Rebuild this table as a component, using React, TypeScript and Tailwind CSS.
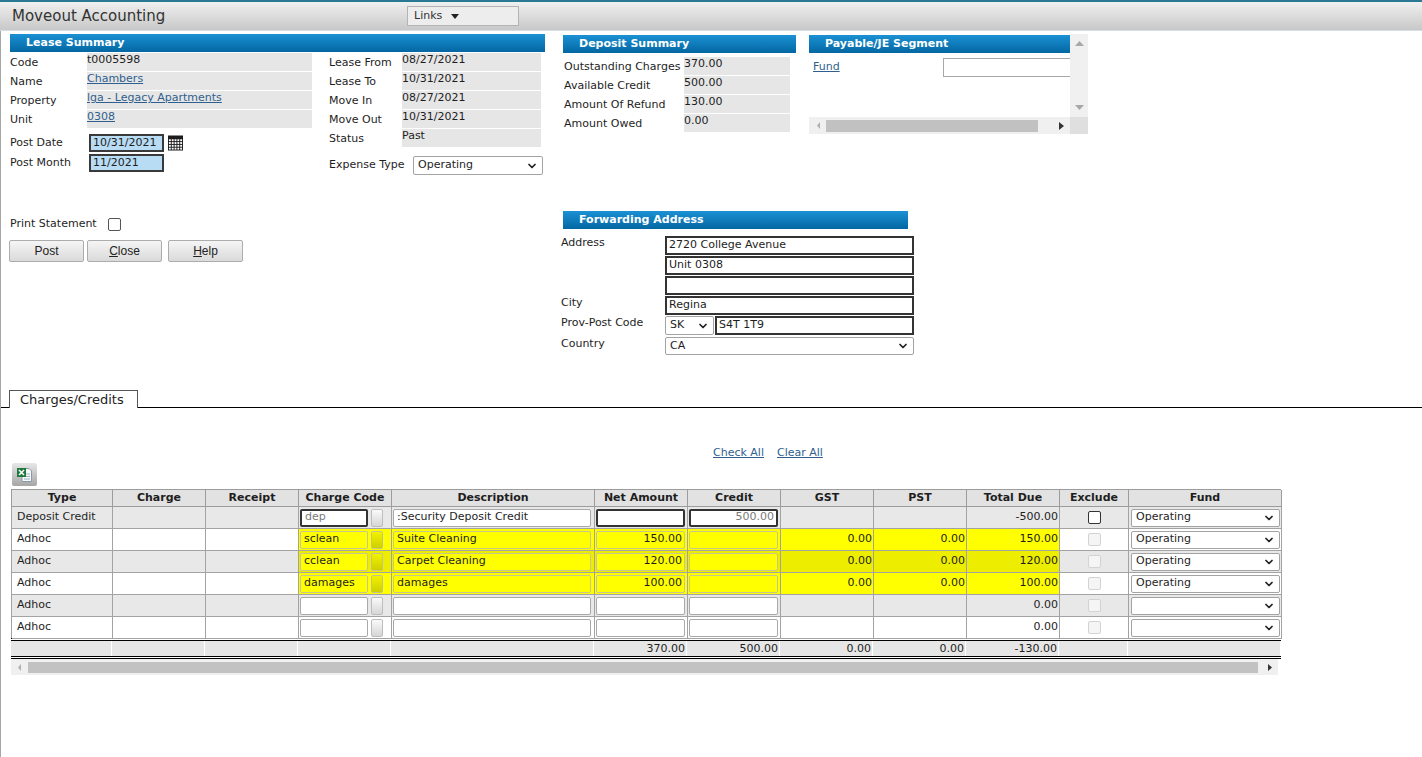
import { ChevronDown } from 'lucide-react';

type ChargeRow = {
  type: string;
  code: string;
  desc: string;
  net: string;
  credit: string;
  gst: string;
  pst: string;
  total: string;
  fund: string;
  deposit?: boolean;
  marked?: boolean;
};

const rows: ChargeRow[] = [
  { type: 'Deposit Credit', code: 'dep', desc: ':Security Deposit Credit', net: '', credit: '500.00', gst: '', pst: '', total: '-500.00', fund: 'Operating', deposit: true },
  { type: 'Adhoc', code: 'sclean', desc: 'Suite Cleaning', net: '150.00', credit: '', gst: '0.00', pst: '0.00', total: '150.00', fund: 'Operating', marked: true },
  { type: 'Adhoc', code: 'cclean', desc: 'Carpet Cleaning', net: '120.00', credit: '', gst: '0.00', pst: '0.00', total: '120.00', fund: 'Operating', marked: true },
  { type: 'Adhoc', code: 'damages', desc: 'damages', net: '100.00', credit: '', gst: '0.00', pst: '0.00', total: '100.00', fund: 'Operating', marked: true },
  { type: 'Adhoc', code: '', desc: '', net: '', credit: '', gst: '', pst: '', total: '0.00', fund: '' },
  { type: 'Adhoc', code: '', desc: '', net: '', credit: '', gst: '', pst: '', total: '0.00', fund: '' },
];

const headers = ['Type', 'Charge', 'Receipt', 'Charge Code', 'Description', 'Net Amount', 'Credit', 'GST', 'PST', 'Total Due', 'Exclude', 'Fund'];
const cols = 'grid grid-cols-[101px_93px_93px_93px_203px_93px_93px_93px_93px_93px_69px_153px]';

function Bar({ title, className = '' }: { title: string; className?: string }) {
  return (
    <div className={`flex h-[18px] items-center bg-linear-to-b from-[#1a91d4] to-[#0467a2] pl-[16px] text-[11px] font-bold text-white ${className}`}>
      {title}
    </div>
  );
}

function Box({ value = '', className = '', right = false }: { value?: string; className?: string; right?: boolean }) {
  return (
    <div className={`flex h-[18px] items-center overflow-hidden whitespace-nowrap rounded-[2px] border ${right ? 'justify-end pr-[2px]' : 'pl-[3px]'} ${className}`}>
      {value}
    </div>
  );
}

function Select({ value, className = '' }: { value: string; className?: string }) {
  return (
    <div className={`flex items-center justify-between rounded-[2px] border border-[#a3a3a3] bg-white pl-[4px] pr-[4px] ${className}`}>
      <span>{value}</span>
      <ChevronDown size={12} strokeWidth={3.5} className="text-[#222]" />
    </div>
  );
}

function Calendar() {
  const cells = [];
  for (let r = 0; r < 4; r++) {
    for (let c = 0; c < 5; c++) {
      cells.push(<rect key={`${r}-${c}`} x={1 + c * 3} y={4 + r * 3} width="2" height="2" fill="#fff" />);
    }
  }
  return (
    <svg width="15" height="16" viewBox="0 0 16 16" className="ml-[4px]">
      <rect x="0" y="0" width="16" height="16" fill="#1c1c1c" />
      {cells}
    </svg>
  );
}

function Link({ children }: { children: React.ReactNode }) {
  return <span className="text-[#2f5f8e] underline">{children}</span>;
}

export default function App() {
  const leaseLeft: [string, string, boolean][] = [
    ['Code', 't0005598', false],
    ['Name', 'Chambers', true],
    ['Property', 'lga - Legacy Apartments', true],
    ['Unit', '0308', true],
  ];
  const leaseRight = [
    ['Lease From', '08/27/2021'],
    ['Lease To', '10/31/2021'],
    ['Move In', '08/27/2021'],
    ['Move Out', '10/31/2021'],
    ['Status', 'Past'],
  ];
  const deposit = [
    ['Outstanding Charges', '370.00'],
    ['Available Credit', '500.00'],
    ['Amount Of Refund', '130.00'],
    ['Amount Owed', '0.00'],
  ];

  return (
    <div className="min-h-[757px] bg-white font-['DejaVu_Sans',sans-serif] text-[11px] text-[#1e1e1e]">
      {/* title bar */}
      <div className="flex h-[31px] items-center border-t-2 border-b border-t-[#2a7896] border-b-[#d6dee5] bg-linear-to-b from-[#f0f0f0] to-[#c8c8c8]">
        <div className="w-[407px] pl-[12px] text-[15px] text-[#333]">Moveout Accounting</div>
        <div className="flex h-[20px] w-[112px] items-center gap-[9px] border border-[#b4b4b4] bg-[#ededed] pl-[6px] text-[11px] text-[#333]">
          Links
          <svg width="8" height="5" viewBox="0 0 8 5"><polygon points="0,0 8,0 4,5" fill="#222" /></svg>
        </div>
      </div>

      <div className="min-h-[726px] border-l border-[#a6a6a6]">
        <div className="flex pl-[9px] pt-[3px]">
          {/* Lease summary */}
          <div className="w-[535px]">
            <Bar title="Lease Summary" />
            <div className="mt-[1px] flex">
              <div className="w-[302px]">
                {leaseLeft.map(([label, value, link]) => (
                  <div key={label} className="mb-[1px] flex h-[18px]">
                    <div className="w-[77px] pt-[3px] leading-[14px]">{label}</div>
                    <div className="w-[225px] bg-[#e6e6e6] leading-[13px]">{link ? <Link>{value}</Link> : value}</div>
                  </div>
                ))}
                <div className="mt-[6px] flex h-[18px] items-center">
                  <div className="w-[79px]">Post Date</div>
                  <div className="flex h-[18px] w-[75px] items-center border-2 border-[#3a3a3a] bg-[#b8dcf3] pl-[2px]">10/31/2021</div>
                  <Calendar />
                </div>
                <div className="mt-[2px] flex h-[18px] items-center">
                  <div className="w-[79px]">Post Month</div>
                  <div className="flex h-[18px] w-[75px] items-center border-2 border-[#3a3a3a] bg-[#b8dcf3] pl-[2px]">11/2021</div>
                </div>
                <div className="mt-[44px] flex h-[16px] items-center">
                  <div className="w-[98px]">Print Statement</div>
                  <div className="h-[13px] w-[13px] rounded-[2px] border border-[#555] bg-white" />
                </div>
                <div className="-ml-[1px] mt-[8px] flex font-['Liberation_Sans',sans-serif] text-[12px] text-[#222]">
                  <div className="flex h-[22px] w-[75px] items-center justify-center rounded-[2px] border border-[#acacac] bg-linear-to-b from-[#f5f5f5] to-[#dadada]">Post</div>
                  <div className="ml-[3px] flex h-[22px] w-[75px] items-center justify-center rounded-[2px] border border-[#acacac] bg-linear-to-b from-[#f5f5f5] to-[#dadada]"><span className="underline">C</span>lose</div>
                  <div className="ml-[6px] flex h-[22px] w-[75px] items-center justify-center rounded-[2px] border border-[#acacac] bg-linear-to-b from-[#f5f5f5] to-[#dadada]"><span className="underline">H</span>elp</div>
                </div>
              </div>
              <div className="ml-[17px] w-[214px]">
                {leaseRight.map(([label, value]) => (
                  <div key={label} className="mb-[1px] flex h-[18px]">
                    <div className="w-[73px] pt-[3px] leading-[14px]">{label}</div>
                    <div className="w-[139px] bg-[#e6e6e6] leading-[13px]">{value}</div>
                  </div>
                ))}
                <div className="mt-[9px] flex items-center">
                  <div className="w-[84px]">Expense Type</div>
                  <Select value="Operating" className="h-[19px] w-[130px]" />
                </div>
              </div>
            </div>
          </div>

          {/* right side */}
          <div className="ml-[18px]">
            <div className="flex">
              <div className="mt-[1px] w-[233px]">
                <Bar title="Deposit Summary" />
                <div className="mt-[4px]">
                  {deposit.map(([label, value]) => (
                    <div key={label} className="mb-[1px] flex h-[18px]">
                      <div className="w-[121px] pl-[1px] pt-[3px] leading-[14px]">{label}</div>
                      <div className="w-[106px] bg-[#e6e6e6] leading-[13px]">{value}</div>
                    </div>
                  ))}
                </div>
              </div>
              <div className="ml-[13px] flex h-[100px] w-[279px] bg-[#f0f0f0]">
                <div className="flex w-[261px] flex-col">
                  <div className="h-[83px] bg-white">
                    <Bar title="Payable/JE Segment" className="mt-[1px]" />
                    <div className="mt-[5px] flex">
                      <div className="w-[134px] pl-[4px] pt-[1px]"><Link>Fund</Link></div>
                      <div className="h-[19px] flex-1 border-y border-l border-[#a8a8a8] bg-white" />
                    </div>
                  </div>
                  <div className="flex h-[17px] items-center">
                    <svg width="17" height="9" viewBox="0 0 17 9"><polygon points="8,4.5 11,1 11,8" fill="#b0b0b0" /></svg>
                    <div className="h-[12px] w-[212px] bg-[#c1c1c1]" />
                    <div className="flex flex-1 justify-end pr-[6px]">
                      <svg width="5" height="8" viewBox="0 0 5 8"><polygon points="0,0 5,4 0,8" fill="#333" /></svg>
                    </div>
                  </div>
                </div>
                <div className="flex w-[18px] flex-col">
                  <div className="flex h-[83px] flex-col items-center justify-between py-[7px]">
                    <svg width="9" height="5" viewBox="0 0 9 5"><polygon points="0,5 9,5 4.5,0" fill="#a8a8a8" /></svg>
                    <svg width="9" height="5" viewBox="0 0 9 5"><polygon points="0,0 9,0 4.5,5" fill="#a8a8a8" /></svg>
                  </div>
                  <div className="flex-1 bg-[#dfdfdf]" />
                </div>
              </div>
            </div>

            {/* Forwarding address */}
            <Bar title="Forwarding Address" className="mt-[77px] w-[345px]" />
            <div className="-ml-[2px] mt-[7px] grid grid-cols-[104px_249px] gap-y-[1px]">
              <div className="leading-[14px]">Address</div>
              <div className="flex h-[19px] items-center border-2 border-[#333] pl-[2px]">2720 College Avenue</div>
              <div />
              <div className="flex h-[19px] items-center border-2 border-[#333] pl-[2px]">Unit 0308</div>
              <div />
              <div className="h-[19px] border-2 border-[#333]" />
              <div className="leading-[14px]">City</div>
              <div className="flex h-[19px] items-center border-2 border-[#333] pl-[2px]">Regina</div>
              <div className="leading-[14px]">Prov-Post Code</div>
              <div className="flex h-[19px]">
                <Select value="SK" className="h-[19px] w-[49px]" />
                <div className="ml-[1px] flex h-[19px] flex-1 items-center border-2 border-[#333] pl-[2px]">S4T 1T9</div>
              </div>
              <div className="pt-[1px] leading-[14px]">Country</div>
              <Select value="CA" className="mt-[1px] h-[18px]" />
            </div>
          </div>
        </div>

        {/* tab strip */}
        <div className="mt-[35px] flex h-[18px] items-end">
          <div className="w-[8px] border-b border-black" />
          <div className="flex h-[18px] w-[129px] items-center border-x border-t border-[#555] pl-[10px] text-[13px] text-[#222]">Charges/Credits</div>
          <div className="flex-1 border-b border-black" />
        </div>

        <div className="mt-[38px] flex h-[14px] items-center gap-[13px] pl-[712px]">
          <Link>Check All</Link>
          <Link>Clear All</Link>
        </div>

        {/* excel export */}
        <div className="ml-[11px] mt-[3px] flex h-[23px] w-[25px] items-center justify-center rounded-[2px] bg-linear-to-b from-[#e8e8e8] to-[#a6a6a6]">
          <svg width="17" height="17" viewBox="0 0 17 17">
            <path d="M6 2.5h7l2.5 2.5v10.5H6z" fill="#f7f9fb" stroke="#8a9aa8" />
            <path d="M8 8h6M8 10.5h6M8 13h6" stroke="#9fb0c0" />
            <rect x="1" y="2" width="9" height="9" fill="#1d7a3c" />
            <path d="M3 4l5 5M8 4l-5 5" stroke="#fff" strokeWidth="1.6" />
          </svg>
        </div>

        {/* grid */}
        <div className="ml-[10px] mt-[3px] w-[1270px]">
          <div className={`${cols} border-l border-t border-[#9c9c9c] bg-[#e2e2e2] font-bold`}>
            {headers.map((h) => (
              <div key={h} className="flex h-[17px] items-center justify-center border-r border-b border-[#9c9c9c]">{h}</div>
            ))}
          </div>
          {rows.map((r, i) => {
            const grey = i % 2 === 0;
            const base = grey ? 'bg-[#e8e8e8]' : 'bg-white';
            const mark = r.marked ? (grey ? 'bg-[#eded00]' : 'bg-[#ffff00]') : base;
            const box = r.marked ? 'border-[#c6c68e] bg-[#ffff00]' : 'border-[#a9a9a9] bg-white';
            const dark = 'border-2 border-[#333] bg-white text-[#7a7a7a]';
            const cell = 'h-[22px] border-r border-b border-[#a3a3a3]';
            return (
              <div key={i} className={`${cols} border-l border-[#a3a3a3]`}>
                <div className={`${cell} ${base} flex items-center pl-[5px]`}>{r.type}</div>
                <div className={`${cell} ${base}`} />
                <div className={`${cell} ${base}`} />
                <div className={`${cell} ${mark} flex items-center pl-[1px]`}>
                  <Box value={r.code} className={`w-[68px] ${r.deposit ? dark : box}`} />
                  <div className={`ml-[3px] h-[18px] w-[12px] rounded-[2px] border ${r.marked ? 'border-[#c4c48a] bg-linear-to-b from-[#f2f200] to-[#cfcf00]' : 'border-[#bdbdbd] bg-linear-to-b from-[#fafafa] to-[#d6d6d6]'}`} />
                </div>
                <div className={`${cell} ${mark} flex items-center pl-[1px]`}>
                  <Box value={r.desc} className={`w-[198px] ${box}`} />
                </div>
                <div className={`${cell} ${mark} flex items-center pl-[1px]`}>
                  <Box value={r.net} right className={`w-[89px] ${r.deposit ? dark : box}`} />
                </div>
                <div className={`${cell} ${mark} flex items-center pl-[1px]`}>
                  <Box value={r.credit} right className={`w-[89px] ${r.deposit ? dark : box}`} />
                </div>
                <div className={`${cell} ${mark} flex items-center justify-end pr-[1px]`}>{r.gst}</div>
                <div className={`${cell} ${mark} flex items-center justify-end pr-[1px]`}>{r.pst}</div>
                <div className={`${cell} ${mark} flex items-center justify-end pr-[1px]`}>{r.total}</div>
                <div className={`${cell} ${base} flex items-center justify-center`}>
                  <div className={`h-[13px] w-[13px] rounded-[2px] border ${r.deposit ? 'border-[#333] bg-white' : 'border-[#d3d3d3] bg-[#f5f5f5]'}`} />
                </div>
                <div className={`${cell} ${base} flex items-center pl-[2px]`}>
                  <Select value={r.fund} className="h-[18px] w-[149px]" />
                </div>
              </div>
            );
          })}
          <div className={`${cols} -mt-[1px] border-y-[3px] border-double border-black`}>
            {['', '', '', '', '', '370.00', '500.00', '0.00', '0.00', '-130.00', '', ''].map((v, i) => (
              <div key={i} className="flex h-[15px] items-center justify-end border-r border-white bg-[#e6e6e6] pr-[1px] leading-[13px]">{v}</div>
            ))}
          </div>
          <div className="flex h-[16px] w-[1267px] items-center bg-[#f0f0f0]">
            <svg width="17" height="9" viewBox="0 0 17 9"><polygon points="7,4.5 10,1 10,8" fill="#b0b0b0" /></svg>
            <div className="h-[11px] flex-1 bg-[#c2c2c2]" />
            <svg width="20" height="9" viewBox="0 0 20 9"><polygon points="10,1 14,4.5 10,8" fill="#333" /></svg>
          </div>
        </div>
      </div>
    </div>
  );
}
